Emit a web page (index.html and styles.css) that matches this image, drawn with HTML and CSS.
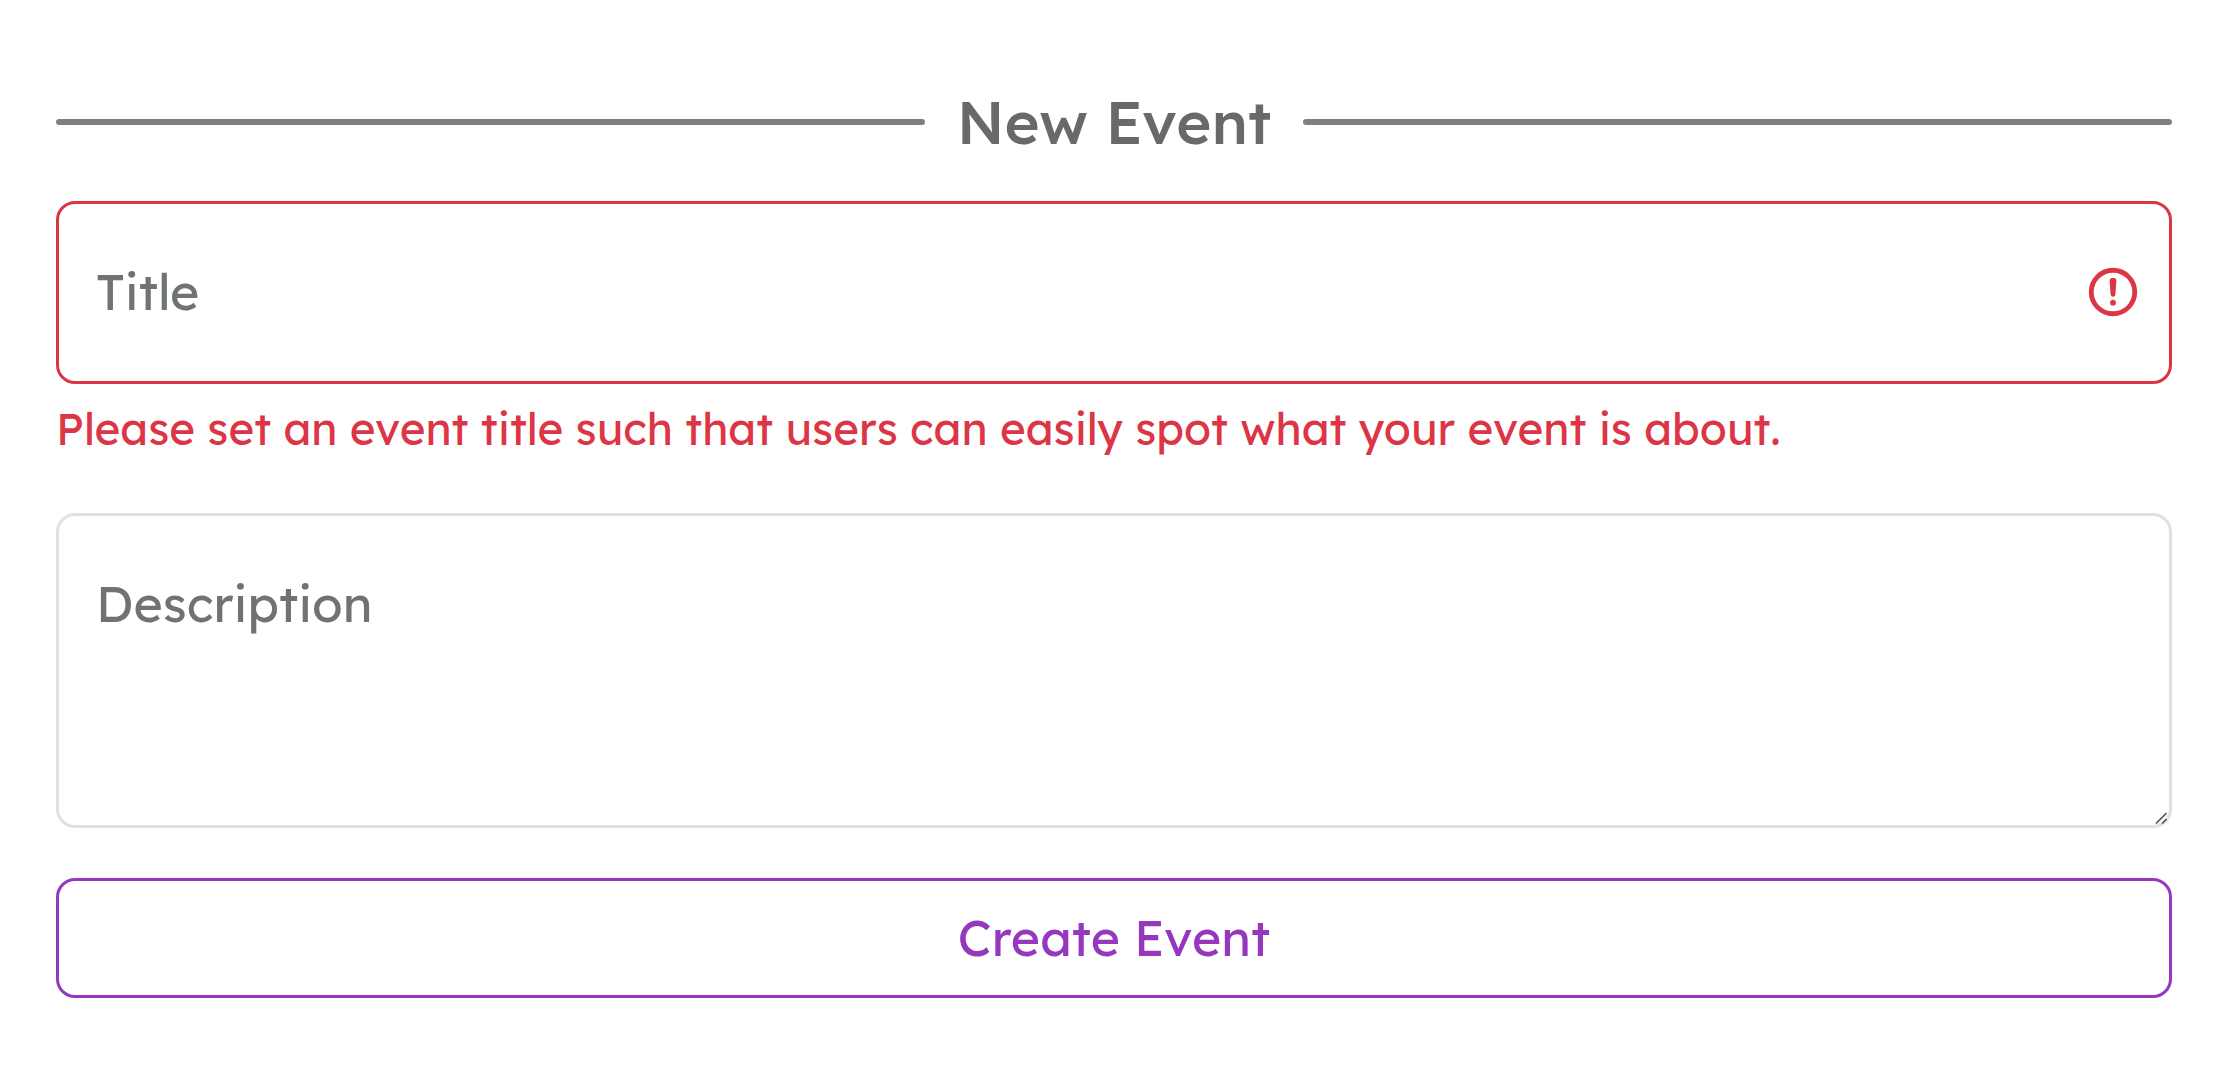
FILE: index.html
```html
<!DOCTYPE html>
<html lang="en">
<head>
<meta charset="utf-8">
<title>New Event</title>
<link rel="stylesheet" href="styles.css">
</head>
<body>
<form class="event-form" novalidate>
  <h1 class="heading">New Event</h1>
  <div class="field field-invalid">
    <input class="control" id="title" type="text" aria-invalid="true" aria-describedby="title-error">
    <label class="label" for="title">Title</label>
    <svg class="alert-icon" viewBox="0 0 12 12" fill="none" stroke="#dc3545" aria-hidden="true">
      <circle cx="6" cy="6" r="4.5"/>
      <path stroke-linejoin="round" d="M5.8 3.6h.4L6 6.5z"/>
      <circle cx="6" cy="8.2" r=".6" fill="#dc3545" stroke="none"/>
    </svg>
  </div>
  <p class="error" id="title-error">Please set an event title such that users can easily spot what your event is about.</p>
  <div class="field">
    <textarea class="control control-multiline" id="description"></textarea>
    <label class="label" for="description">Description</label>
    <svg class="grip" viewBox="0 0 12 12" fill="none" stroke="#555" stroke-width="1.6" aria-hidden="true">
      <path d="M1 11.5 11.5 1M7 11.5 11.5 7"/>
    </svg>
  </div>
  <button class="submit" type="button">Create Event</button>
</form>
</body>
</html>
```
FILE: styles.css
```css
* {
  box-sizing: border-box;
}

body {
  margin: 0;
  background: #fff;
  font-family: Lexend, Inter, "Noto Sans", sans-serif;
}

.event-form {
  padding: 84px 58px 80px 56px;
}

.heading {
  display: flex;
  align-items: center;
  gap: 32px;
  margin: 0 0 41px;
  color: #696969;
  font-size: 60px;
  font-weight: 500;
  line-height: 76px;
}

.heading::before,
.heading::after {
  content: "";
  flex: 1;
  height: 6px;
  border-radius: 3px;
  background: #808080;
}

.field {
  position: relative;
}

.control {
  display: block;
  width: 100%;
  height: 183px;
  padding: 54px 38px;
  border: 3px solid #dee2e6;
  border-radius: 19px;
  outline: none;
  background: #fff;
  color: #212529;
  font: 50px/72px Lexend, Inter, "Noto Sans", sans-serif;
}

.control-multiline {
  height: 315px;
  resize: vertical;
}

.control-multiline::-webkit-resizer {
  background: transparent;
}

.field-invalid .control {
  padding-right: 120px;
  border-color: #dc3545;
}

.label {
  position: absolute;
  top: 55px;
  left: 40px;
  color: #6f7376;
  font-size: 50px;
  line-height: 72px;
  pointer-events: none;
}

.alert-icon {
  position: absolute;
  top: 62px;
  right: 30px;
  width: 58px;
  height: 58px;
}

.grip {
  position: absolute;
  right: 5px;
  bottom: 4px;
  width: 12px;
  height: 12px;
  pointer-events: none;
}

.error {
  margin: 11px 0 50px;
  color: #dc3545;
  font-size: 44px;
  line-height: 68px;
}

.submit {
  display: block;
  width: 100%;
  height: 120px;
  margin-top: 50px;
  padding: 0;
  border: 3px solid #9538be;
  border-radius: 19px;
  background: #fff;
  color: #9538be;
  font: 50px/72px Lexend, Inter, "Noto Sans", sans-serif;
}
```
